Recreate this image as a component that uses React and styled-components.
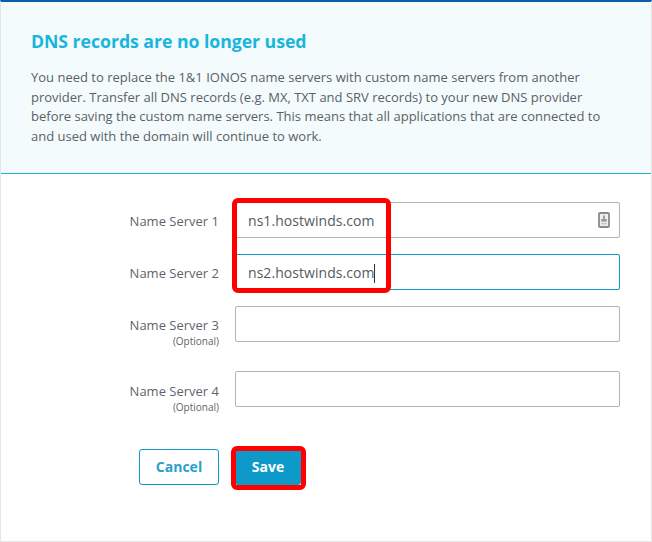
import React from "react";
import styled, { createGlobalStyle } from "styled-components";

const Global = createGlobalStyle`
  html, body { margin: 0; padding: 0; background: #fff; }
  * { box-sizing: border-box; }
  body { font-family: "Open Sans", "Liberation Sans", sans-serif; }
`;

const Page = styled.div`
  position: relative;
  width: 652px;
  height: 542px;
  overflow: hidden;
  background: #fff;
  border-top: 2px solid #0b5fa8;
  border-left: 1px solid #e6e6e6;
  border-right: 1px solid #e6e6e6;
  border-bottom: 1px solid #e6e6e6;
`;

const EdgeMark = styled.span`
  position: absolute;
  top: 0;
  ${(p) => (p.$side === "left" ? "left: -1px;" : "right: -1px;")}
  width: 1px;
  height: 31px;
  background: #0b4ea2;
`;

const Notice = styled.section`
  height: 172px;
  padding: 26px 30px 0;
  background: #f3fbfd;
  border-bottom: 1px solid #1fb1d6;
`;

const Heading = styled.h2`
  margin: 0 0 14px;
  font-size: 17.7px;
  line-height: 26px;
  font-weight: 700;
  letter-spacing: -0.05px;
  color: #19b5dc;
`;

const Body = styled.p`
  margin: 0;
  font-size: 13px;
  line-height: 19.5px;
  color: #5b5f66;
`;

const Form = styled.form`
  display: flex;
  flex-direction: column;
  padding: 28px 31px 0 0;
`;

const Row = styled.div`
  display: grid;
  grid-template-columns: 218px 385px;
  column-gap: 16px;
  align-items: start;
  height: ${(p) => p.$h}px;
`;

const Label = styled.label`
  display: block;
  padding-top: ${(p) => p.$top}px;
  text-align: right;
  font-size: 13px;
  line-height: 18px;
  color: #60646b;
`;

const Optional = styled.small`
  display: block;
  margin-top: 2px;
  font-size: 10px;
  line-height: 11px;
  color: #60646b;
`;

const Field = styled.div`
  display: flex;
  align-items: center;
  justify-content: space-between;
  height: 36px;
  padding: ${(p) => (p.$active ? "2px" : "0")} 9px 0 12px;
  background: #fff;
  border: 1px solid ${(p) => (p.$active ? "#0d9ac9" : "#b4b4b4")};
  border-radius: 2px;
  font-size: 14px;
  letter-spacing: 0.05px;
  color: #565a60;
`;

const Caret = styled.span`
  display: inline-block;
  width: 1px;
  height: 19px;
  background: #33363a;
  vertical-align: middle;
`;

const Actions = styled.div`
  display: flex;
  gap: 16px;
  margin: 13px 0 0 138px;
`;

const Button = styled.button`
  width: ${(p) => (p.$primary ? "66px" : "80px")};
  height: 36px;
  padding: 0 0 2px;
  font-family: inherit;
  font-size: 14px;
  font-weight: 700;
  border-radius: 3px;
  border: 1px solid #0d9ac9;
  color: ${(p) => (p.$primary ? "#fff" : "#2a9fc9")};
  background: ${(p) => (p.$primary ? "#0d9ac9" : "#fff")};
`;

const Highlight = styled.div`
  position: absolute;
  left: ${(p) => p.$x}px;
  top: ${(p) => p.$y}px;
  width: ${(p) => p.$w}px;
  height: ${(p) => p.$h}px;
  border: 5px solid #fe0000;
  border-radius: 6px;
  pointer-events: none;
`;

const KeyIcon = () => (
  <svg width="12" height="16" viewBox="0 0 12 16" aria-hidden="true">
    <rect x="1" y="1" width="10" height="14" rx="1" fill="#efefef" stroke="#8a8a8a" strokeWidth="1.8" />
    <path d="M6 3.5v4" stroke="#8a8a8a" strokeWidth="1.6" />
    <rect x="3.2" y="7" width="5.6" height="2.6" fill="#9a9a9a" />
    <rect x="3.2" y="10.8" width="5.6" height="1.6" fill="#c4c4c4" />
  </svg>
);

export default function App() {
  return (
    <>
      <Global />
      <Page>
        <EdgeMark $side="left" />
        <EdgeMark $side="right" />
        <Notice>
          <Heading>DNS records are no longer used</Heading>
          <Body>
            You need to replace the 1&amp;1 IONOS name servers with custom name servers from another
            <br />
            provider. Transfer all DNS records (e.g. MX, TXT and SRV records) to your new DNS provider
            <br />
            before saving the custom name servers. This means that all applications that are connected to
            <br />
            and used with the domain will continue to work.
          </Body>
        </Notice>
        <Form>
          <Row $h={52}>
            <Label $top={10}>Name Server 1</Label>
            <Field>
              <span>ns1.hostwinds.com</span>
              <KeyIcon />
            </Field>
          </Row>
          <Row $h={52}>
            <Label $top={10}>Name Server 2</Label>
            <Field $active>
              <span>
                ns2.hostwinds.com
                <Caret />
              </span>
            </Field>
          </Row>
          <Row $h={65}>
            <Label $top={10}>
              Name Server 3<Optional>(Optional)</Optional>
            </Label>
            <Field />
          </Row>
          <Row $h={65}>
            <Label $top={11}>
              Name Server 4<Optional>(Optional)</Optional>
            </Label>
            <Field />
          </Row>
          <Actions>
            <Button type="button">Cancel</Button>
            <Button type="button" $primary>Save</Button>
          </Actions>
        </Form>
        <Highlight $x={231} $y={196} $w={159} $h={95} />
        <Highlight $x={230} $y={444} $w={75} $h={44} />
      </Page>
    </>
  );
}
